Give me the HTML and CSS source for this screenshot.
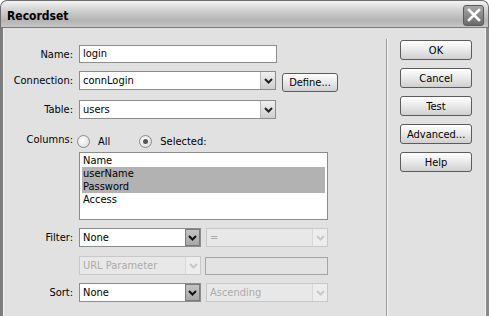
FILE: index.html
```html
<!DOCTYPE html>
<html lang="en">
<head>
    <meta charset="UTF-8">
    <title>Recordset</title>
    <link rel="stylesheet" href="styles.css">
</head>
<body>
<div class="window">
    <!-- Заголовок окна -->
    <div class="titlebar">
        <span class="title">Recordset</span>
        <span class="close">
            <svg width="14" height="14" viewBox="0 0 14 14"><path d="M2 2 L12 12 M12 2 L2 12" stroke="#fff" stroke-width="2.6" stroke-linecap="square"/></svg>
        </span>
    </div>

    <div class="dialog">
        <!-- Форма слева -->
        <div class="form">
            <label class="lbl">Name:</label>
            <div class="ctl">
                <div class="input w198">login</div>
            </div>

            <label class="lbl">Connection:</label>
            <div class="ctl">
                <div class="select w197">
                    <span class="value">connLogin</span>
                    <span class="arrow"><svg width="9" height="6" viewBox="0 0 9 6"><path d="M1 1 L4.5 4.5 L8 1" fill="none" stroke="#222" stroke-width="2"/></svg></span>
                </div>
                <button class="btn define">Define...</button>
            </div>

            <label class="lbl">Table:</label>
            <div class="ctl">
                <div class="select w197">
                    <span class="value">users</span>
                    <span class="arrow"><svg width="9" height="6" viewBox="0 0 9 6"><path d="M1 1 L4.5 4.5 L8 1" fill="none" stroke="#222" stroke-width="2"/></svg></span>
                </div>
            </div>

            <label class="lbl lbl-columns">Columns:</label>
            <div class="ctl radios">
                <span class="radio"></span><span class="radio-text">All</span>
                <span class="radio checked"></span><span class="radio-text">Selected:</span>
            </div>

            <div></div>
            <div class="ctl">
                <div class="listbox">
                    <div class="item">Name</div>
                    <div class="item sel">userName</div>
                    <div class="item sel">Password</div>
                    <div class="item">Access</div>
                </div>
            </div>

            <label class="lbl">Filter:</label>
            <div class="ctl gap5">
                <div class="select w122">
                    <span class="value">None</span>
                    <span class="arrow hot"><svg width="9" height="6" viewBox="0 0 9 6"><path d="M1 1 L4.5 4.5 L8 1" fill="none" stroke="#111" stroke-width="2"/></svg></span>
                </div>
                <div class="select w122 disabled">
                    <span class="value">=</span>
                    <span class="arrow"><svg width="9" height="6" viewBox="0 0 9 6"><path d="M1 1 L4.5 4.5 L8 1" fill="none" stroke="#c8c8c8" stroke-width="2"/></svg></span>
                </div>
            </div>

            <div></div>
            <div class="ctl gap4">
                <div class="select w122 disabled">
                    <span class="value">URL Parameter</span>
                    <span class="arrow"><svg width="9" height="6" viewBox="0 0 9 6"><path d="M1 1 L4.5 4.5 L8 1" fill="none" stroke="#c8c8c8" stroke-width="2"/></svg></span>
                </div>
                <div class="input w123 disabled"></div>
            </div>

            <label class="lbl">Sort:</label>
            <div class="ctl gap5">
                <div class="select w122">
                    <span class="value">None</span>
                    <span class="arrow hot"><svg width="9" height="6" viewBox="0 0 9 6"><path d="M1 1 L4.5 4.5 L8 1" fill="none" stroke="#111" stroke-width="2"/></svg></span>
                </div>
                <div class="select w122 disabled">
                    <span class="value">Ascending</span>
                    <span class="arrow"><svg width="9" height="6" viewBox="0 0 9 6"><path d="M1 1 L4.5 4.5 L8 1" fill="none" stroke="#c8c8c8" stroke-width="2"/></svg></span>
                </div>
            </div>
        </div>

        <!-- Кнопки справа -->
        <div class="side">
            <button class="btn wide">OK</button>
            <button class="btn wide">Cancel</button>
            <button class="btn wide">Test</button>
            <button class="btn wide">Advanced...</button>
            <button class="btn wide">Help</button>
        </div>
    </div>
</div>
</body>
</html>
```

FILE: styles.css
```css
body {
    margin: 0;
    padding: 0;
    background: #fff;
    font-family: "DejaVu Sans Condensed", "DejaVu Sans", sans-serif;
    font-size: 11px;
    color: #000;
}

/* Окно */
.window {
    width: 489px;
    height: 316px;
    display: flex;
    flex-direction: column;
}

.titlebar {
    height: 28px;
    border: 1px solid #6e6e6e;
    border-bottom-color: #7a7a7a;
    border-radius: 7px 7px 0 0;
    background: linear-gradient(#f4f4f4 0%, #d2d2d2 35%, #b4b4b4 75%, #c6c6c6 100%);
    display: flex;
    align-items: center;
    justify-content: space-between;
    padding: 0 4px 0 6px;
    box-sizing: border-box;
}

.title {
    font-weight: bold;
    font-size: 12px;
    padding-top: 3px;
}

.close {
    width: 21px;
    height: 21px;
    margin-top: 2px;
    border: 1px solid #5a5a5a;
    border-radius: 3px;
    background: linear-gradient(#a8a8a8, #6a6a6a);
    display: flex;
    align-items: center;
    justify-content: center;
    box-sizing: border-box;
}

.dialog {
    flex: 1;
    display: flex;
    background: #e1e1e1;
    border-left: 3px solid #7c7c7c;
    border-right: 3px solid #8a8a8a;
    box-shadow: inset 1px 0 #f2f2f2, inset -1px 0 #f2f2f2;
}

/* Форма */
.form {
    width: 383px;
    padding-top: 17px;
    display: grid;
    grid-template-columns: 70px 1fr;
    grid-template-rows: 18px 21px 19px 17px 68px 20px 19px 19px;
    column-gap: 6px;
    row-gap: 8px;
    align-content: start;
}

.lbl {
    text-align: right;
    line-height: 19px;
}

.lbl-columns {
    padding-top: 3px;
}

.ctl {
    display: flex;
    align-items: flex-start;
    gap: 6px;
}

.gap5 { gap: 5px; }
.gap4 { gap: 4px; }

.input {
    height: 18px;
    line-height: 16px;
    padding-left: 3px;
    border: 1px solid #8c8c8c;
    background: #fff;
    box-sizing: border-box;
}

.w198 { width: 198px; }
.w197 { width: 197px; }
.w122 { width: 122px; }
.w123 { width: 123px; }

.input.disabled {
    height: 18px;
    background: #e3e3e3;
    border-color: #a4a4a4;
    margin-top: 1px;
}

.select {
    height: 19px;
    border: 1px solid #8c8c8c;
    background: #fff;
    display: flex;
    align-items: center;
    box-sizing: border-box;
}

.select .value {
    flex: 1;
    padding-left: 3px;
    white-space: nowrap;
    overflow: hidden;
}

.select .arrow {
    width: 15px;
    height: 17px;
    border-left: 1px solid #b8b8b8;
    background: linear-gradient(#f0f0f0, #cfcfcf);
    display: flex;
    align-items: center;
    justify-content: center;
    box-sizing: border-box;
}

.select .arrow.hot {
    background: linear-gradient(#c4c4c4, #a8a8a8);
    border: 1px solid #7a7a7a;
}

.select.disabled {
    background: #e8e8e8;
    border-color: #c8c8c8;
    color: #ababab;
}

.select.disabled .arrow {
    background: #ededed;
    border-left-color: #d8d8d8;
}

/* Радио */
.radios {
    align-items: center;
    gap: 0;
    height: 17px;
    padding-top: 6px;
}

.radio {
    width: 13px;
    height: 13px;
    border: 1px solid #8a8a8a;
    border-radius: 50%;
    background: radial-gradient(circle at 40% 40%, #ffffff, #d6d6d6);
    box-sizing: border-box;
    position: relative;
    margin-left: -2px;
}

.radio.checked::after {
    content: "";
    position: absolute;
    left: 3px;
    top: 3px;
    width: 5px;
    height: 5px;
    border-radius: 50%;
    background: #555;
}

.radio-text {
    margin-left: 8px;
    margin-right: 31px;
}

/* Список колонок */
.listbox {
    width: 249px;
    height: 68px;
    border: 1px solid #8c8c8c;
    background: #fff;
    padding: 1px 2px;
    box-sizing: border-box;
}

.item {
    height: 13px;
    line-height: 13px;
    padding-left: 1px;
}

.item.sel {
    background: #b2b2b2;
}

/* Кнопки */
.btn {
    font-family: inherit;
    font-size: 11px;
    color: #000;
    height: 19px;
    padding: 0 6px;
    border: 1px solid #5c5c5c;
    border-radius: 3px;
    background: linear-gradient(#ffffff, #e4e4e4 60%, #cfcfcf);
    box-sizing: border-box;
}

.define {
    margin-top: 2px;
    width: 56px;
}

.side {
    margin-top: 11px;
    border-left: 1px solid #9a9a9a;
    box-shadow: inset 1px 0 #f6f6f6;
    padding: 1px 0 0 13px;
    display: flex;
    flex-direction: column;
    gap: 8px;
}

.btn.wide {
    width: 72px;
    height: 20px;
}
```
